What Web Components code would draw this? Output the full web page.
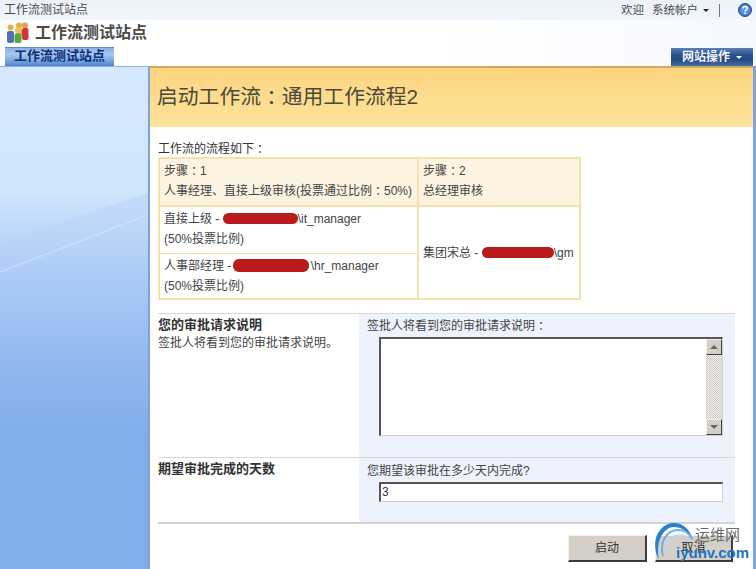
<!DOCTYPE html>
<html lang="zh">
<head>
<meta charset="utf-8">
<title>启动工作流</title>
<style>
  html, body { margin: 0; padding: 0; }
  body {
    width: 756px;
    height: 569px;
    overflow: hidden;
    position: relative;
    background: #fff;
    color: #333;
    font: 12px/19px "Liberation Sans", "Noto Sans CJK SC", sans-serif;
  }
  .cols { display: flex; height: 503px; }
  .k { font-feature-settings: "halt"; padding: 0 .25em; }
</style>
</head>
<body>
  <wf-topbar site="工作流测试站点"></wf-topbar>
  <wf-header title="工作流测试站点" tab="工作流测试站点" actions="网站操作"></wf-header>
  <div class="cols">
    <wf-sidebar></wf-sidebar>
    <wf-main>
      <wf-title>启动工作流<span class="k">：</span>通用工作流程2</wf-title>
      <wf-flow></wf-flow>
      <wf-section style="--h:143px" heading="您的审批请求说明" desc="签批人将看到您的审批请求说明。" label="签批人将看到您的审批请求说明：">
        <wf-textarea></wf-textarea>
      </wf-section>
      <wf-section style="--h:64px;--pad:4px" heading="期望审批完成的天数" label="您期望该审批在多少天内完成?">
        <wf-field>3</wf-field>
      </wf-section>
      <wf-footer>
        <wf-button>启动</wf-button>
        <wf-button style="width:78px">取消</wf-button>
      </wf-footer>
    </wf-main>
  </div>
  <wf-watermark></wf-watermark>

<script>
// the reference centres its full-width colons, Noto SC keeps them left:
// half-width glyph with padding either side lands it in the middle
const colon = s => s.replace(/：/g, '<span class="k">：</span>');
const colonCss = `.k { font-feature-settings: "halt"; padding: 0 .25em; }`;

class WfTopbar extends HTMLElement {
  constructor() {
    super();
    this.attachShadow({ mode: "open" });
    this.shadowRoot.innerHTML = `
    <style>
      :host {
        display: flex;
        align-items: center;
        height: 20px;
        box-sizing: border-box;
        padding-left: 4px;
        background: linear-gradient(#ecf2fb, #f1f5fc);
        color: #4c4c4c;
      }
      .right { margin-left: auto; display: flex; align-items: center; font-size: 11.5px; }
      .who { margin-left: 8px; }
      .arrow { width: 0; height: 0; margin: 1px 10px 0 5px; border: 3px solid transparent; border-top: 3px solid #222; border-bottom: 0; }
      .sep { width: 1px; height: 13px; background: #777; margin-right: 18px; }
      svg { display: block; margin-right: 4px; }
    </style>
    <span>${this.getAttribute("site")}</span>
    <div class="right">
      <span>欢迎</span><span class="who">系统帐户</span>
      <i class="arrow"></i><i class="sep"></i>
      <svg width="14" height="14" viewBox="0 0 14 14">
        <circle cx="7" cy="7" r="6.5" fill="#3a6fc0" stroke="#2a4f90"/>
        <circle cx="7" cy="7" r="5" fill="#5c92dc"/>
        <path d="M5 5.4c0-1.3 1-1.9 2.1-1.9s2.1.7 2.1 1.8c0 1.6-2.1 1.6-2.1 3.1" fill="none" stroke="#fff" stroke-width="1.5"/>
        <rect x="6.3" y="9.4" width="1.6" height="1.6" fill="#fff"/>
      </svg>
    </div>`;
  }
}

class WfHeader extends HTMLElement {
  constructor() {
    super();
    this.attachShadow({ mode: "open" });
    this.shadowRoot.innerHTML = `
    <style>
      :host { display: block; height: 46px; background: linear-gradient(90deg, #fff 60%, #f5f8fe); }
      .brand { display: flex; align-items: center; height: 25px; padding: 0 0 2px 6px; box-sizing: content-box; }
      svg { display: block; margin-right: 7px; }
      h1 { margin: 0 0 0 -1px; font-size: 16px; line-height: 24px; font-weight: 700; color: #4a4a4a; }
      .tabs { display: flex; align-items: flex-end; height: 19px; padding: 0 3px 0 5px; }
      .tab {
        width: 109px; height: 19px; box-sizing: border-box; text-align: center;
        font-size: 13px; line-height: 15px; font-weight: 700; color: #0d2f78;
        border-top: 1px solid #5d8ac6;
        background: linear-gradient(#8db4e6, #a6c7f0 35%, #7ca5dd 70%, #4f84c8);
      }
      .act {
        margin-left: auto; width: 82px; height: 18px; box-sizing: border-box;
        display: flex; align-items: center; justify-content: center;
        font-size: 12px; font-weight: 700; color: #f2f6fc;
        background: linear-gradient(#5a81b6, #2d5590 35%, #24497f 65%, #426ca6);
      }
      .act i { width: 0; height: 0; margin-left: 6px; border: 3px solid transparent; border-top: 3px solid #fff; border-bottom: 0; }
    </style>
    <div class="brand">
      <svg width="23" height="21" viewBox="0 0 23 21">
        <circle cx="13" cy="3.5" r="3" fill="#e8b23a"/>
        <rect x="10" y="6" width="6" height="8" rx="2" fill="#e8b23a"/>
        <circle cx="19" cy="3.5" r="3" fill="#e2a04a"/>
        <rect x="16" y="6" width="6.5" height="12" rx="2" fill="#d2363a"/>
        <circle cx="4.5" cy="5.5" r="3" fill="#e2b04a"/>
        <rect x="1" y="9" width="7" height="12" rx="2" fill="#4f72b8"/>
        <circle cx="12" cy="8.5" r="3" fill="#edc25a"/>
        <rect x="8.5" y="11.5" width="7" height="9.5" rx="2" fill="#58a83e"/>
      </svg>
      <h1>${this.getAttribute("title")}</h1>
    </div>
    <div class="tabs">
      <div class="tab">${this.getAttribute("tab")}</div>
      <div class="act">${this.getAttribute("actions")}<i></i></div>
    </div>`;
  }
}

class WfSidebar extends HTMLElement {
  constructor() {
    super();
    this.attachShadow({ mode: "open" });
    this.shadowRoot.innerHTML = `
    <style>
      :host {
        display: block; position: relative; flex: 0 0 148px; overflow: hidden;
        border-top: 1px solid #8fb0dc; border-right: 2px solid #7fa3d2;
        background: linear-gradient(#d6e8fe, #d0e5fd 125px, #abcbf7 205px, #93b9f0 290px, #81aeea 365px);
      }
      svg { position: absolute; left: 0; top: 0; }
    </style>
    <svg width="148" height="300" viewBox="0 0 148 300">
      <defs>
        <linearGradient id="band" x1="0" y1="0" x2="0" y2="1">
          <stop offset="0" stop-color="#b4d0f6" stop-opacity=".45"/>
          <stop offset="1" stop-color="#b4d0f6" stop-opacity="0"/>
        </linearGradient>
      </defs>
      <polygon points="0,176 148,126 148,260 0,260" fill="url(#band)"/>
      <line x1="0" y1="205" x2="145" y2="149" stroke="#d8e8fd" stroke-width="1" opacity=".8"/>
    </svg>`;
  }
}

class WfMain extends HTMLElement {
  constructor() {
    super();
    this.attachShadow({ mode: "open" });
    this.shadowRoot.innerHTML = `
    <style>
      :host {
        display: block; flex: 1; min-width: 0; background: #fff;
        border-right: 3px solid #7ba5dc;
      }
    </style>
    <slot></slot>`;
  }
}

class WfTitle extends HTMLElement {
  constructor() {
    super();
    this.attachShadow({ mode: "open" });
    this.shadowRoot.innerHTML = `
    <style>
      :host {
        display: block; height: 61px; box-sizing: border-box;
        padding: 0 0 0 7px; font-size: 20.8px; line-height: 57px; color: #4a4a3a;
        border-top: 2px solid #d3a960;
        background: linear-gradient(#fdd580, #fde39b);
      }
    </style>
    <slot></slot>`;
  }
}

class WfFlow extends HTMLElement {
  constructor() {
    super();
    this.attachShadow({ mode: "open" });
    this.shadowRoot.innerHTML = `
    <style>
      ${colonCss}
      :host { display: block; margin: 14px 0 0 8px; }
      p { margin: 0; height: 16px; line-height: 17px; color: #333; }
      .grid {
        display: grid; grid-template-columns: 259px 160px; grid-template-rows: 48px 47px 44px;
        width: 423px; height: 143px; box-sizing: border-box;
        border: 2px solid #f6e0ac; color: #444; line-height: 20px;
      }
      .c { padding: 2px 0 0 4px; white-space: nowrap; box-sizing: border-box; }
      .h { background: #fdf3e1; border-bottom: 2px solid #f6e0ac; }
      .l { border-right: 2px solid #f6e0ac; }
      .m { border-bottom: 1px solid #f6e0ac; }
      .r { grid-column: 2; grid-row: 2 / 4; display: flex; align-items: center; padding: 0 0 0 4px; }
      b { display: inline-block; height: 11px; border-radius: 6px; background: #bb1a1c; vertical-align: -1px; }
    </style>
    <p>${colon("工作流的流程如下：")}</p>
    <div class="grid">
      <div class="c h l">${colon("步骤：1")}<br>${colon("人事经理、直接上级审核(投票通过比例：50%)")}</div>
      <div class="c h">${colon("步骤：2")}<br>总经理审核</div>
      <div class="c l m">直接上级 - <b style="width:75px"></b>\\it_manager<br>(50%投票比例)</div>
      <div class="c r"><span>集团宋总 - <b style="width:72px"></b>\\gm</span></div>
      <div class="c l">人事部经理 - <b style="width:76px;height:13px;vertical-align:-2px;margin:0 2px 0 -2px"></b>\\hr_manager<br>(50%投票比例)</div>
    </div>`;
  }
}

class WfSection extends HTMLElement {
  constructor() {
    super();
    this.attachShadow({ mode: "open" });
    const desc = this.getAttribute("desc");
    this.shadowRoot.innerHTML = `
    <style>
      ${colonCss}
      :host {
        display: flex; width: 577px; height: var(--h); margin: 13px 0 0 8px;
        border-top: 1px solid #d8d8d8; color: #444;
      }
      :host(:last-of-type) { margin-top: 0; }
      .left { flex: 0 0 201px; padding-top: 1px; }
      h3 { margin: 0; font-size: 13px; line-height: 19px; font-weight: 700; color: #333; }
      .right { flex: 1; background: #edf2fc; padding: var(--pad, 3px) 12px 0 8px; }
      .right div { height: 20px; }
      ::slotted(*) { margin-left: 12px; }
    </style>
    <div class="left">
      <h3>${this.getAttribute("heading")}</h3>
      ${desc ? `<span>${desc}</span>` : ""}
    </div>
    <div class="right">
      <div>${colon(this.getAttribute("label"))}</div>
      <slot></slot>
    </div>`;
  }
}

class WfTextarea extends HTMLElement {
  constructor() {
    super();
    this.attachShadow({ mode: "open" });
    this.shadowRoot.innerHTML = `
    <style>
      :host {
        display: flex; justify-content: flex-end; width: 344px; height: 99px; box-sizing: border-box;
        background: #fff; border: 2px solid #555; border-right: 1px solid #d4d0c8; border-bottom: 1px solid #d4d0c8;
      }
      .bar { width: 16px; display: flex; flex-direction: column; justify-content: space-between;
        background: repeating-conic-gradient(#c9c7c0 0 25%, #f4f3ef 0 50%) 0 0 / 2px 2px; }
      .btn {
        height: 16px; box-sizing: border-box; background: #d4d0c8; display: flex; align-items: center; justify-content: center;
        border: 1px solid; border-color: #f0eee8 #404040 #404040 #f0eee8;
      }
      .up { width: 0; height: 0; border: 4px solid transparent; border-bottom: 4px solid #666; border-top: 0; }
      .down { width: 0; height: 0; border: 4px solid transparent; border-top: 4px solid #666; border-bottom: 0; }
    </style>
    <div class="bar">
      <div class="btn"><i class="up"></i></div>
      <div class="btn"><i class="down"></i></div>
    </div>`;
  }
}

class WfField extends HTMLElement {
  constructor() {
    super();
    this.attachShadow({ mode: "open" });
    this.shadowRoot.innerHTML = `
    <style>
      :host {
        display: block; width: 344px; height: 20px; box-sizing: border-box; padding-left: 1px;
        background: #fff; border: 2px solid #555; border-right: 1px solid #d4d0c8; border-bottom: 1px solid #d4d0c8;
        line-height: 17px; color: #333;
      }
    </style>
    <slot></slot>`;
  }
}

class WfFooter extends HTMLElement {
  constructor() {
    super();
    this.attachShadow({ mode: "open" });
    this.shadowRoot.innerHTML = `
    <style>
      :host {
        display: flex; justify-content: flex-end; gap: 8px;
        width: 577px; margin-left: 8px; padding: 11px 2px 0 0; box-sizing: border-box;
        border-top: 2px solid #d2d2d2;
      }
    </style>
    <slot></slot>`;
  }
}

class WfButton extends HTMLElement {
  constructor() {
    super();
    this.attachShadow({ mode: "open" });
    this.shadowRoot.innerHTML = `
    <style>
      :host {
        display: flex; align-items: center; justify-content: center;
        width: 79px; height: 27px; box-sizing: border-box;
        background: #d4d0c8; color: #333;
        border: 1px solid; border-color: #f4f2ec #3c3c3c #3c3c3c #f4f2ec;
        border-width: 1px 2px 2px 1px;
      }
    </style>
    <slot></slot>`;
  }
}

class WfWatermark extends HTMLElement {
  constructor() {
    super();
    this.attachShadow({ mode: "open" });
    this.shadowRoot.innerHTML = `
    <style>
      :host { position: absolute; left: 650px; top: 520px; width: 106px; height: 49px; }
      svg { position: absolute; left: 0; top: 0; }
      .cn { position: absolute; left: 45px; top: 6px; font-size: 15px; line-height: 18px; color: #6a6a6a; white-space: nowrap; }
      .en { position: absolute; left: 26px; top: 24px; font: 700 15px/18px "Liberation Sans", sans-serif; color: #1c74c4; white-space: nowrap; }
    </style>
    <svg width="60" height="49" viewBox="0 0 60 49">
      <path d="M9 40C-1 21 10 2 25 3c9 .5 15 7 18 17C38 11 31 7 24 7 13 7 5 23 9 40z" fill="#2b80c8"/>
      <path d="M13 36C9 22 17 10 28 10c6 0 11 3 14 9" fill="none" stroke="#6fb0e4" stroke-width="2"/>
      <path d="M17 32c-1-9 5-17 12-17 5 0 8 2 10 5" fill="none" stroke="#b8d8f2" stroke-width="1.5"/>
    </svg>
    <span class="cn">运维网</span>
    <span class="en">iyunv.com</span>`;
  }
}

customElements.define("wf-topbar", WfTopbar);
customElements.define("wf-header", WfHeader);
customElements.define("wf-sidebar", WfSidebar);
customElements.define("wf-main", WfMain);
customElements.define("wf-title", WfTitle);
customElements.define("wf-flow", WfFlow);
customElements.define("wf-section", WfSection);
customElements.define("wf-textarea", WfTextarea);
customElements.define("wf-field", WfField);
customElements.define("wf-footer", WfFooter);
customElements.define("wf-button", WfButton);
customElements.define("wf-watermark", WfWatermark);
</script>
</body>
</html>
